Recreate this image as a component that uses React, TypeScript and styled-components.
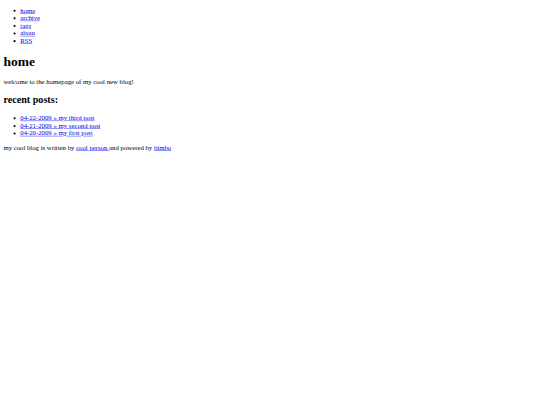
import React from "react";
import styled, { createGlobalStyle } from "styled-components";

const Global = createGlobalStyle`
  html, body { background: #ffffff; overflow: hidden; }
  body {
    margin: 0;
    font-family: "Liberation Serif", "Times New Roman", serif;
    font-size: 16px;
    color: #000000;
  }
`;

/* The reference is a 1280×960 page shown at 540×405: lay out at full size, then scale. */
const Viewport = styled.div`
  display: flow-root;
  width: 1280px;
  transform: scale(0.421875);
  transform-origin: 0 0;
`;

const Page = styled.div`
  margin: 8px;
`;

const List = styled.ul`
  margin: 16px 0;
  padding-left: 40px;
  list-style: disc;
`;

const Item = styled.li`
  display: list-item;
`;

const Link = styled.a`
  color: #0000ee;
  text-decoration: underline;
  cursor: pointer;
`;

const Title = styled.h1`
  font-size: 2em;
  font-weight: bold;
  margin: 0.67em 0;
`;

const SubTitle = styled.h2`
  font-size: 1.5em;
  font-weight: bold;
  margin: 0.83em 0;
`;

const Para = styled.p`
  margin: 1em 0;
`;

const nav = ["home", "archive", "tags", "about", "RSS"];
const posts = [
  { date: "04-22-2009", title: "my third post" },
  { date: "04-21-2009", title: "my second post" },
  { date: "04-20-2009", title: "my first post" },
];

export default function App() {
  return (
    <Viewport>
      <Global />
      <Page>
        <List>
          {nav.map((n) => (
            <Item key={n}>
              <Link href="#">{n}</Link>
            </Item>
          ))}
        </List>
        <Title>home</Title>
        <Para>welcome to the homepage of my cool new blog!</Para>
        <SubTitle>recent posts:</SubTitle>
        <List>
          {posts.map((p) => (
            <Item key={p.date}>
              <Link href="#">
                {p.date} » {p.title}
              </Link>
            </Item>
          ))}
        </List>
        <Para>
          my cool blog is written by <Link href="#">cool person </Link>and powered by{" "}
          <Link href="#">bimbo</Link>
        </Para>
      </Page>
    </Viewport>
  );
}
